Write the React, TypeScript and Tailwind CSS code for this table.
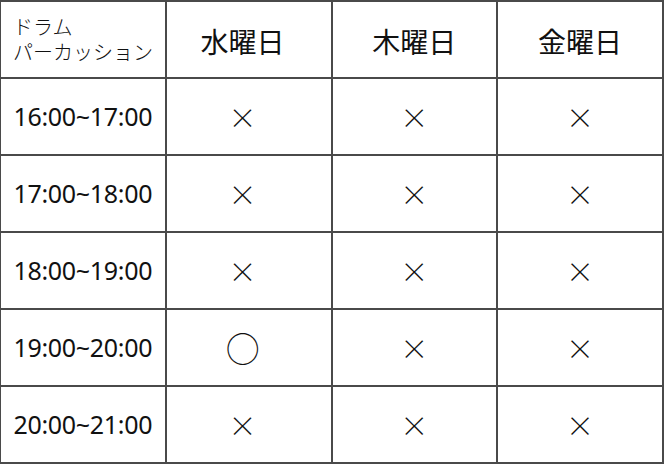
const days = ['水曜日', '木曜日', '金曜日'];

const rows: { time: string; marks: string[] }[] = [
  { time: '16:00~17:00', marks: ['×', '×', '×'] },
  { time: '17:00~18:00', marks: ['×', '×', '×'] },
  { time: '18:00~19:00', marks: ['×', '×', '×'] },
  { time: '19:00~20:00', marks: ['○', '×', '×'] },
  { time: '20:00~21:00', marks: ['×', '×', '×'] },
];

const cjk = { fontFamily: '"Noto Sans CJK JP", sans-serif' };

function Mark({ value }: { value: string }) {
  if (value === '○') {
    return (
      <span className="text-[34px] leading-none font-light" style={cjk}>
        ○
      </span>
    );
  }
  return (
    <span className="text-[28px] leading-none font-light" style={cjk}>
      ×
    </span>
  );
}

export default function App() {
  return (
    <div
      className="w-[664px] h-[464px] bg-[#4a4a4a] pt-[2px] pr-[2px] pb-[2px] pl-px text-[#111]"
      style={{ fontFamily: '"Noto Sans", "Noto Sans CJK JP", sans-serif' }}
    >
      <div className="grid h-full grid-cols-4 grid-rows-6 gap-[2px]">
        <div className="flex flex-col justify-center bg-white pl-3 text-[20px] leading-[25px] font-light">
          <span>ドラム</span>
          <span>パーカッション</span>
        </div>
        {days.map((d, i) => (
          <div
            key={d}
            className={`flex items-center justify-center bg-white pt-1 text-[28px] ${i === 0 ? 'pr-3' : ''}`}
          >
            {d}
          </div>
        ))}
        {rows.map((r) => (
          <>
            <div key={r.time} className="flex items-center justify-center bg-white text-[25px] tracking-[-0.3px]">
              {r.time}
            </div>
            {r.marks.map((m, i) => (
              <div
                key={r.time + i}
                className={`flex items-center justify-center bg-white ${i === 0 ? 'pr-3' : ''}`}
              >
                <Mark value={m} />
              </div>
            ))}
          </>
        ))}
      </div>
    </div>
  );
}
